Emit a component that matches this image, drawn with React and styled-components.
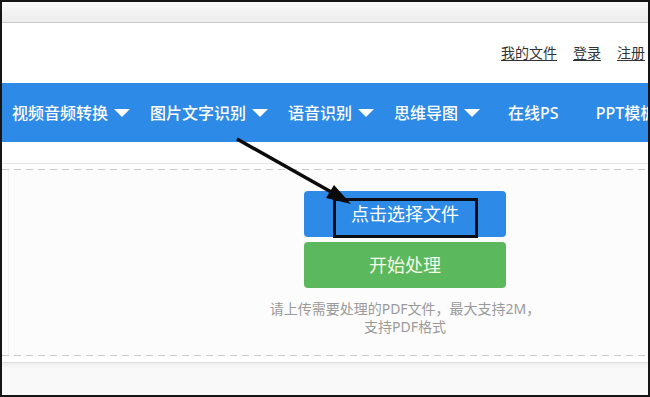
import React from 'react'
import styled, { createGlobalStyle } from 'styled-components'

const GlobalStyle = createGlobalStyle`
  html, body {
    margin: 0;
    padding: 0;
    background: #fff;
  }
  body {
    font-family: "Noto Sans", "Noto Sans CJK SC", sans-serif;
  }
`

const Frame = styled.div`
  position: relative;
  width: 650px;
  height: 397px;
  box-sizing: border-box;
  border: 2px solid #151515;
  overflow: hidden;
  display: flex;
  flex-direction: column;
  background: #fff;
`

const TopStrip = styled.div`
  height: 20px;
  flex: none;
  background: linear-gradient(#f8f8f8, #eeeeee);
  border-bottom: 1px solid #c9c9c9;
`

const Header = styled.div`
  height: 60px;
  flex: none;
  display: flex;
  align-items: center;
  justify-content: flex-end;
  padding-right: 3px;
`

const HeaderLink = styled.a`
  font-size: 14px;
  line-height: 18px;
  color: #333;
  text-decoration: underline;
  text-underline-offset: 2px;
  margin-left: 16px;
  cursor: pointer;
`

const Nav = styled.nav`
  height: 59px;
  flex: none;
  display: flex;
  align-items: center;
  background: #2d8ae6;
  white-space: nowrap;
`

const NavItem = styled.div`
  display: flex;
  align-items: center;
  flex: none;
  padding: 0 ${props => props.pad || 10}px;
  color: #fff;
  font-size: 16px;
  font-weight: 500;
  line-height: 20px;
  cursor: pointer;
`

const Caret = styled.i`
  display: inline-block;
  width: 0;
  height: 0;
  margin-left: 6px;
  border-left: 8px solid transparent;
  border-right: 8px solid transparent;
  border-top: 8px solid #fff;
`

const UploadWrap = styled.section`
  margin-top: 21px;
  flex: none;
  border-top: 1px solid #e4e4e4;
  border-bottom: 1px solid #dcdcdc;
  padding: 5px 0 6px;
`

const dash = 'repeating-linear-gradient(90deg, #c9c9c9 0 7px, transparent 7px 12px)'

const DropZone = styled.div`
  display: flex;
  flex-direction: column;
  align-items: center;
  padding: 22px 0 20px 160px;
  background:
    ${dash} top left / 100% 1px no-repeat,
    ${dash} bottom left / 100% 1px no-repeat,
    linear-gradient(90deg, transparent 6px, #f3f3f3 6px 7px, transparent 7px) 0 0 / 100% 100% no-repeat,
    #fcfcfc;
`

const Button = styled.div`
  position: relative;
  width: 202px;
  height: 46px;
  border-radius: 4px;
  display: flex;
  align-items: center;
  justify-content: center;
  font-size: 18px;
  line-height: 22px;
  background: ${props => props.bg};
  color: ${props => props.fg || '#fff'};
  margin-top: ${props => props.gap || 0}px;
  cursor: pointer;
`

const Highlight = styled.span`
  position: absolute;
  left: 29px;
  top: 7px;
  width: 145px;
  height: 40px;
  box-sizing: border-box;
  border: 3px solid #0c0c14;
  pointer-events: none;
`

const Hint = styled.p`
  margin: 12px 0 0;
  font-size: 14px;
  line-height: 18px;
  color: #9a9a9a;
  text-align: center;
`

const Footer = styled.div`
  flex: 1;
  background: linear-gradient(#efefef, #f9f9f9 6px);
`

const Overlay = styled.svg`
  position: absolute;
  left: -2px;
  top: -2px;
  pointer-events: none;
`

const navItems = [
  { label: '视频音频转换', menu: true },
  { label: '图片文字识别', menu: true },
  { label: '语音识别', menu: true },
  { label: '思维导图', menu: true },
  { label: '在线PS', pad: 18 },
  { label: 'PPT模板', pad: 19 },
]

export default function App () {
  return (
    <>
      <GlobalStyle/>
      <Frame>
        <TopStrip/>
        <Header>
          <HeaderLink>我的文件</HeaderLink>
          <HeaderLink>登录</HeaderLink>
          <HeaderLink>注册</HeaderLink>
        </Header>
        <Nav>
          {navItems.map(item => (
            <NavItem key={item.label} pad={item.pad}>
              {item.label}
              {item.menu ? <Caret/> : null}
            </NavItem>
          ))}
        </Nav>
        <UploadWrap>
          <DropZone>
            <Button bg='#2d8ae6'>
              点击选择文件
              <Highlight/>
            </Button>
            <Button bg='#5cb85c' fg='#f5fbe6' gap={5}>开始处理</Button>
            <Hint>
              请上传需要处理的PDF文件，最大支持2M，<br/>
              支持PDF格式
            </Hint>
          </DropZone>
        </UploadWrap>
        <Footer/>
        <Overlay width='650' height='397' viewBox='0 0 650 397'>
          <line x1='237' y1='139' x2='333' y2='193' stroke='#0a0a0a' strokeWidth='3.5'/>
          <polygon points='351,204 326,198 334,185' fill='#0a0a0a'/>
        </Overlay>
      </Frame>
    </>
  )
}
